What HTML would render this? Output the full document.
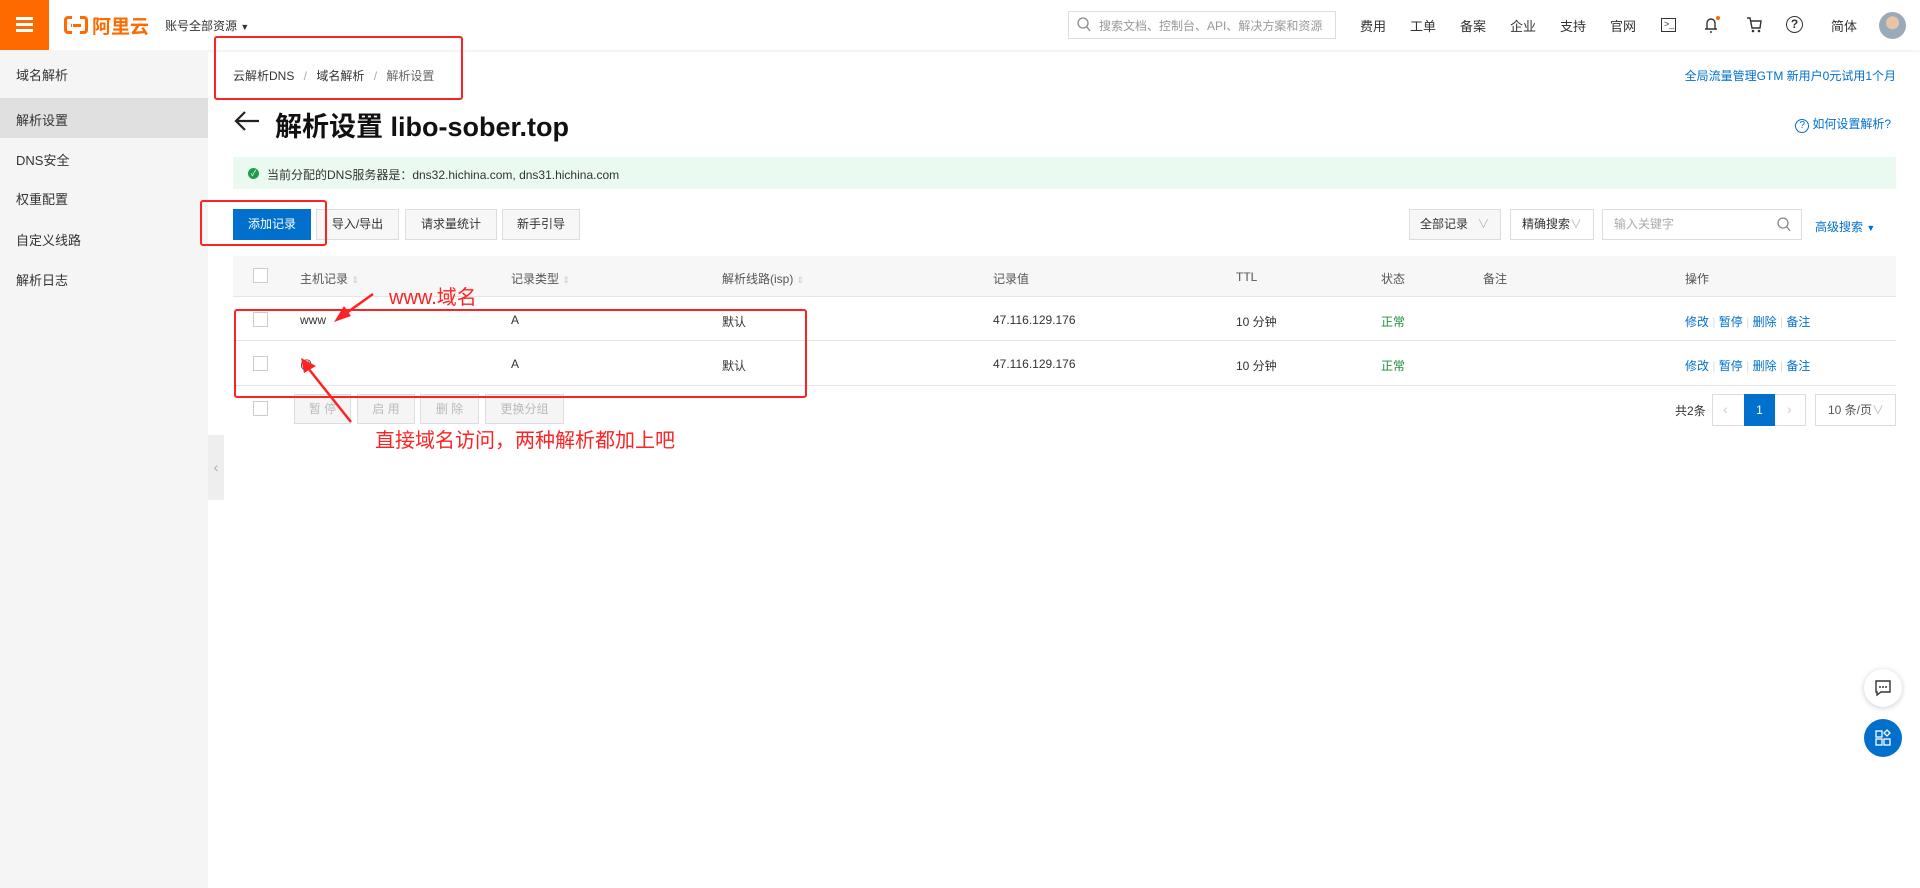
<!DOCTYPE html>
<html><head><meta charset="utf-8"><style>
*{margin:0;padding:0;box-sizing:border-box}
body{width:1920px;height:888px;position:relative;overflow:hidden;background:#fff;font-family:"Liberation Sans","Noto Sans CJK SC",sans-serif;font-size:12px;color:#333}
.a{position:absolute;white-space:nowrap}
.hdr{position:absolute;left:0;top:0;width:1920px;height:50px;background:#fff;box-shadow:0 1px 3px rgba(0,0,0,.08)}
.nav{top:16px;font-size:13px;color:#333}
.side{position:absolute;left:0;top:50px;width:208px;height:838px;background:#f5f5f5}
.si{position:absolute;left:16px;font-size:13px;color:#333}
.btn{position:absolute;height:31px;border:1px solid #ddd;background:#f7f7f7;text-align:center;line-height:29px;font-size:12px;color:#333}
.th{top:270px;color:#555}
.r1{top:313px}.r2{top:357px}
.blue{color:#0070cc}
.red{position:absolute;border:2px solid #f22;border-radius:3px}
.cb{position:absolute;width:15px;height:15px;border:1px solid #ccc;background:#fff}
.line{position:absolute;left:233px;width:1663px;height:1px;background:#e5e5e5}
.dis{position:absolute;height:30px;border:1px solid #ddd;background:#f5f5f5;color:#bbb;text-align:center;line-height:28px}
</style></head><body>
<div class="hdr"></div>
<div class="a" style="left:0;top:0;width:49px;height:50px;background:#ff6a00"></div>
<div class="a" style="left:16px;top:17px;width:17px;height:3px;background:#fff;box-shadow:0 6px 0 #fff,0 12px 0 #fff"></div>
<div class="a" style="left:64px;top:16px;width:24px;height:18px;border:3px solid #ff6a00;border-radius:4px"></div>
<div class="a" style="left:71px;top:24px;width:10px;height:3px;background:#ff6a00"></div>
<div class="a" style="left:72px;top:10px;width:8px;height:30px;background:#fff"></div>
<div class="a" style="left:73px;top:24px;width:8px;height:3px;background:#ff6a00"></div>
<div class="a" style="left:92px;top:12px;font-size:19px;font-weight:bold;color:#ff6a00">阿里云</div>
<div class="a" style="left:165px;top:17px;font-size:12px;color:#333">账号全部资源 <span style="font-size:9px">▼</span></div>
<div class="a" style="left:1068px;top:11px;width:268px;height:28px;border:1px solid #ddd"></div>
<svg class="a" style="left:1077px;top:17px" width="14" height="16"><circle cx="6" cy="6" r="5" fill="none" stroke="#888" stroke-width="1.3"/><line x1="9.5" y1="9.5" x2="13" y2="14" stroke="#888" stroke-width="1.3"/></svg>
<div class="a" style="left:1099px;top:17px;color:#999;font-size:12px">搜索文档、控制台、API、解决方案和资源</div>
<div class="a nav" style="left:1360px">费用</div>
<div class="a nav" style="left:1410px">工单</div>
<div class="a nav" style="left:1460px">备案</div>
<div class="a nav" style="left:1510px">企业</div>
<div class="a nav" style="left:1560px">支持</div>
<div class="a nav" style="left:1610px">官网</div>
<div class="a" style="left:1661px;top:18px;width:15px;height:14px;border:1.5px solid #333;font-size:9px;line-height:10px;padding-left:2px">&gt;_</div>
<svg class="a" style="left:1703px;top:15px" width="18" height="20"><path d="M4 14V8a4 4 0 0 1 8 0v6M2 14h12M7 17h2" fill="none" stroke="#333" stroke-width="1.4"/><circle cx="15" cy="3" r="2" fill="#ff6a00"/></svg>
<svg class="a" style="left:1746px;top:16px" width="18" height="18"><path d="M1 2h3l2 10h8l1-7H5" fill="none" stroke="#333" stroke-width="1.4"/><circle cx="7" cy="15" r="1.3" fill="#333"/><circle cx="13" cy="15" r="1.3" fill="#333"/></svg>
<div class="a" style="left:1786px;top:16px;width:17px;height:17px;border:1.5px solid #333;border-radius:50%;text-align:center;font-size:12px;line-height:14px;font-weight:bold">?</div>
<div class="a nav" style="left:1831px">简体</div>
<div class="a" style="left:1879px;top:12px;width:27px;height:27px;border-radius:50%;background:radial-gradient(circle at 50% 40%,#e8c3a5 0 30%,#9ab 32%)"></div>

<div class="side"></div>
<div class="si" style="top:65px">域名解析</div>
<div class="a" style="left:0;top:98px;width:208px;height:40px;background:#e0e0e0"></div>
<div class="si" style="top:110px">解析设置</div>
<div class="si" style="top:150px">DNS安全</div>
<div class="si" style="top:189px">权重配置</div>
<div class="si" style="top:230px">自定义线路</div>
<div class="si" style="top:270px">解析日志</div>
<div class="a" style="left:208px;top:435px;width:16px;height:65px;background:#eee;color:#aaa;font-size:14px;line-height:65px;text-align:center">‹</div>

<div class="a" style="left:233px;top:67px;color:#333">云解析DNS <span style="color:#aaa;margin:0 6px">/</span> 域名解析 <span style="color:#aaa;margin:0 6px">/</span> <span style="color:#666">解析设置</span></div>
<div class="red" style="left:214px;top:36px;width:249px;height:64px"></div>
<div class="a blue" style="right:24px;top:67px;font-size:12px">全局流量管理GTM 新用户0元试用1个月</div>
<svg class="a" style="left:233px;top:110px" width="28" height="22"><path d="M26 11H3M12 2 3 11l9 9" fill="none" stroke="#222" stroke-width="2.2"/></svg>
<div class="a" style="left:275px;top:105px;font-size:27px;font-weight:bold;color:#111">解析设置 libo-sober.top</div>
<div class="a blue" style="right:29px;top:115px;font-size:12px"><span style="display:inline-block;width:14px;height:14px;border:1px solid #0070cc;border-radius:50%;text-align:center;font-size:10px;line-height:12px;margin-right:3px">?</span>如何设置解析?</div>
<div class="a" style="left:233px;top:157px;width:1663px;height:32px;background:#ebfaf0"></div>
<div class="a" style="left:248px;top:168px;width:11px;height:11px;border-radius:50%;background:#1e9e48;color:#fff;font-size:8px;line-height:11px;text-align:center">✓</div>
<div class="a" style="left:267px;top:166px;font-size:12px">当前分配的DNS服务器是：dns32.hichina.com, dns31.hichina.com</div>

<div class="btn" style="left:233px;top:209px;width:78px;background:#0070cc;border-color:#0070cc;color:#fff">添加记录</div>
<div class="btn" style="left:316px;top:209px;width:83px">导入/导出</div>
<div class="btn" style="left:405px;top:209px;width:92px">请求量统计</div>
<div class="btn" style="left:502px;top:209px;width:78px">新手引导</div>
<div class="red" style="left:200px;top:200px;width:127px;height:46px"></div>
<div class="btn" style="left:1409px;top:209px;width:92px;text-align:left;padding-left:10px">全部记录 <span style="color:#bbb;margin-left:6px">∨</span></div>
<div class="btn" style="left:1510px;top:209px;width:84px;background:#fff;text-align:left;padding-left:11px">精确搜索<span style="color:#bbb">∨</span></div>
<div class="btn" style="left:1602px;top:209px;width:200px;background:#fff;text-align:left;padding-left:11px;color:#aaa">输入关键字</div>
<svg class="a" style="left:1777px;top:217px" width="14" height="16"><circle cx="6" cy="6" r="5" fill="none" stroke="#888" stroke-width="1.3"/><line x1="9.5" y1="9.5" x2="13" y2="14" stroke="#888" stroke-width="1.3"/></svg>
<div class="a blue" style="left:1815px;top:218px">高级搜索 <span style="font-size:9px">▼</span></div>

<div class="a" style="left:233px;top:256px;width:1663px;height:40px;background:#f7f7f7"></div>
<div class="line" style="top:296px"></div>
<div class="line" style="top:340px"></div>
<div class="line" style="top:385px"></div>
<div class="cb" style="left:253px;top:268px"></div>
<div class="cb" style="left:253px;top:312px"></div>
<div class="cb" style="left:253px;top:356px"></div>
<div class="cb" style="left:253px;top:401px"></div>
<div class="a th" style="left:300px">主机记录 <span style="color:#ccc;font-size:9px">⇕</span></div>
<div class="a th" style="left:511px">记录类型 <span style="color:#ccc;font-size:9px">⇕</span></div>
<div class="a th" style="left:722px">解析线路(isp) <span style="color:#ccc;font-size:9px">⇕</span></div>
<div class="a th" style="left:993px">记录值</div>
<div class="a th" style="left:1236px">TTL</div>
<div class="a th" style="left:1381px">状态</div>
<div class="a th" style="left:1483px">备注</div>
<div class="a th" style="left:1685px">操作</div>
<div class="a r1" style="left:300px">www</div><div class="a r1" style="left:511px">A</div><div class="a r1" style="left:722px">默认</div><div class="a r1" style="left:993px">47.116.129.176</div><div class="a r1" style="left:1236px">10 分钟</div><div class="a r1" style="left:1381px;color:#1e8e3e">正常</div>
<div class="a r1 blue" style="left:1685px">修改 <span style="color:#ddd">|</span> 暂停 <span style="color:#ddd">|</span> 删除 <span style="color:#ddd">|</span> 备注</div>
<div class="a r2" style="left:300px">@</div><div class="a r2" style="left:511px">A</div><div class="a r2" style="left:722px">默认</div><div class="a r2" style="left:993px">47.116.129.176</div><div class="a r2" style="left:1236px">10 分钟</div><div class="a r2" style="left:1381px;color:#1e8e3e">正常</div>
<div class="a r2 blue" style="left:1685px">修改 <span style="color:#ddd">|</span> 暂停 <span style="color:#ddd">|</span> 删除 <span style="color:#ddd">|</span> 备注</div>
<div class="dis" style="left:294px;top:394px;width:57px">暂 停</div>
<div class="dis" style="left:357px;top:394px;width:58px">启 用</div>
<div class="dis" style="left:420px;top:394px;width:59px">删 除</div>
<div class="dis" style="left:485px;top:394px;width:79px">更换分组</div>
<div class="a" style="left:1675px;top:402px">共2条</div>
<div class="a" style="left:1712px;top:394px;width:94px;height:32px;border:1px solid #ddd"></div>
<div class="a" style="left:1723px;top:401px;color:#ccc;font-size:14px">‹</div>
<div class="a" style="left:1744px;top:394px;width:31px;height:32px;background:#0070cc;color:#fff;text-align:center;line-height:32px">1</div>
<div class="a" style="left:1787px;top:401px;color:#ccc;font-size:14px">›</div>
<div class="a" style="left:1815px;top:394px;width:81px;height:32px;border:1px solid #ddd;line-height:30px;padding-left:12px;color:#555">10 条/页<span style="color:#bbb">∨</span></div>
<div class="red" style="left:234px;top:309px;width:573px;height:89px"></div>

<div class="a" style="left:389px;top:281px;font-size:20px;color:#f22">www.域名</div>
<div class="a" style="left:375px;top:424px;font-size:20px;color:#f22">直接域名访问，两种解析都加上吧</div>
<svg class="a" style="left:0;top:0" width="1920" height="888">
<line x1="373" y1="294" x2="345" y2="314" stroke="#f22" stroke-width="2.5"/><polygon points="334,322 344,306 351,316" fill="#f22"/>
<line x1="351" y1="422" x2="308" y2="368" stroke="#f22" stroke-width="2.5"/><polygon points="301,358 316,366 304,373" fill="#f22"/>
</svg>

<div class="a" style="left:1864px;top:669px;width:38px;height:38px;border-radius:50%;background:#fff;box-shadow:0 1px 6px rgba(0,0,0,.2)"></div>
<svg class="a" style="left:1874px;top:679px" width="18" height="18"><path d="M2 2h14v11H7l-4 3v-3H2z" fill="none" stroke="#333" stroke-width="1.4"/><circle cx="6" cy="8" r="1" fill="#333"/><circle cx="9" cy="8" r="1" fill="#333"/><circle cx="12" cy="8" r="1" fill="#333"/></svg>
<div class="a" style="left:1864px;top:719px;width:38px;height:38px;border-radius:50%;background:#0070cc"></div>
<svg class="a" style="left:1874px;top:729px" width="18" height="18"><rect x="2" y="2" width="6" height="6" fill="none" stroke="#fff" stroke-width="1.3"/><rect x="2" y="10" width="6" height="6" fill="none" stroke="#fff" stroke-width="1.3"/><rect x="10" y="10" width="6" height="6" fill="none" stroke="#fff" stroke-width="1.3"/><path d="M13 1l3 3-3 3-3-3z" fill="none" stroke="#fff" stroke-width="1.3"/></svg>
</body></html>
